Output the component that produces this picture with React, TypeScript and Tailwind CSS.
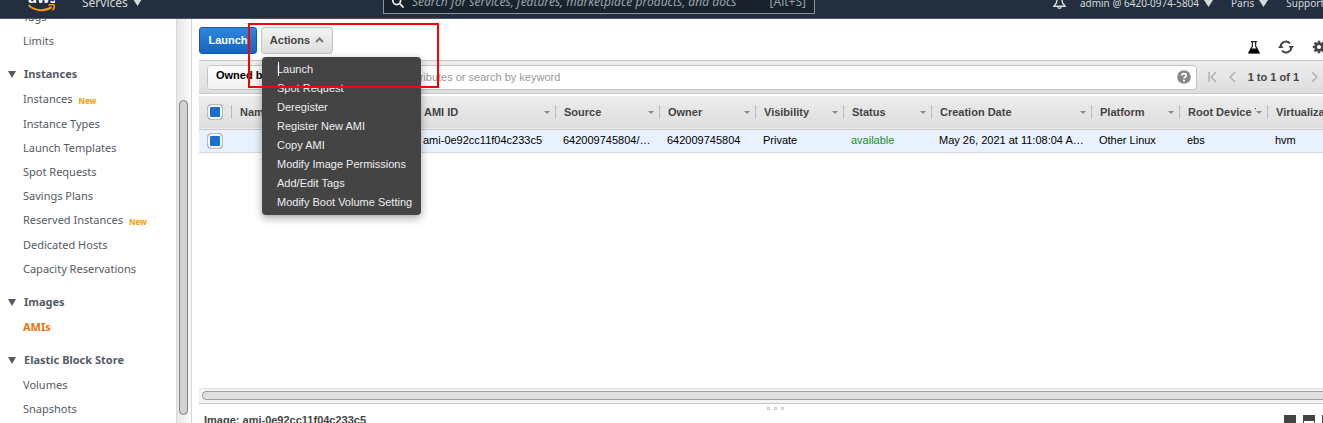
import type { ReactNode } from "react";

type NavItem = { label: string; isNew?: boolean; active?: boolean };
type NavSection = { title?: string; items: NavItem[] };

const sections: NavSection[] = [
  { items: [{ label: "Tags" }, { label: "Limits" }] },
  {
    title: "Instances",
    items: [
      { label: "Instances", isNew: true },
      { label: "Instance Types" },
      { label: "Launch Templates" },
      { label: "Spot Requests" },
      { label: "Savings Plans" },
      { label: "Reserved Instances", isNew: true },
      { label: "Dedicated Hosts" },
      { label: "Capacity Reservations" },
    ],
  },
  { title: "Images", items: [{ label: "AMIs", active: true }] },
  {
    title: "Elastic Block Store",
    items: [{ label: "Volumes" }, { label: "Snapshots" }],
  },
];

const actions = [
  "Launch",
  "Spot Request",
  "Deregister",
  "Register New AMI",
  "Copy AMI",
  "Modify Image Permissions",
  "Add/Edit Tags",
  "Modify Boot Volume Setting",
];

const columns = [
  { label: "Name", value: "", width: "w-[184px]" },
  { label: "AMI ID", value: "ami-0e92cc11f04c233c5", width: "w-[140px]" },
  { label: "Source", value: "642009745804/ami", width: "w-[104px]" },
  { label: "Owner", value: "642009745804", width: "w-24" },
  { label: "Visibility", value: "Private", width: "w-[88px]" },
  { label: "Status", value: "available", width: "w-[88px]" },
  { label: "Creation Date", value: "May 26, 2021 at 11:08:04 AM UTC", width: "w-40" },
  { label: "Platform", value: "Other Linux", width: "w-[88px]" },
  { label: "Root Device Type", value: "ebs", width: "w-[88px]" },
  { label: "Virtualization", value: "hvm", width: "w-[104px]" },
];

function Caret({ className }: { className: string }) {
  return (
    <svg viewBox="0 0 10 8" preserveAspectRatio="none" className={className} aria-hidden="true">
      <path d="M0 0h10L5 8z" fill="currentColor" />
    </svg>
  );
}

function TopMenu({ children }: { children: ReactNode }) {
  return (
    <button type="button" className="flex shrink-0 items-center gap-[5px] whitespace-nowrap">
      {children}
      <Caret className="h-[7px] w-[9px]" />
    </button>
  );
}

function TopBar() {
  return (
    <header className="-mt-[15px] flex h-[34px] shrink-0 items-center border-b border-[#4b5563] bg-[#232f3e] font-['Noto_Sans',sans-serif] text-[#d5dbdb]">
      <div className="flex w-[383px] shrink-0 items-center gap-[27px] pt-[2px] pl-7">
        <a href="#home" aria-label="AWS home">
          <svg viewBox="0 0 27 20" className="h-5 w-[27px]">
            <text x="0" y="10" fontSize="15" fontWeight="700" fill="#fff" fontFamily="Noto Sans, sans-serif">
              aws
            </text>
            <path d="M0.500 12.200C7 18.400 17 18.600 23.600 14.200" fill="none" stroke="#f90" strokeWidth="2" />
            <path d="M20.500 12.200c3-.8 5-.7 5.600-.2.5.8 0 3.400-1.500 5.200" fill="none" stroke="#f90" strokeWidth="1.500" />
          </svg>
        </a>
        <TopMenu>
          <span className="text-xs">Services</span>
        </TopMenu>
      </div>
      <div className="flex h-6 w-[432px] items-center gap-2 border border-[#879596] bg-[#1a222d] pt-px pr-2 pl-2">
        <svg viewBox="0 0 14 14" className="size-3 shrink-0" fill="none" stroke="#eaeded" strokeWidth="2" aria-hidden="true">
          <circle cx="5.500" cy="5.500" r="4.500" />
          <path d="M9 9l4.500 4.500" />
        </svg>
        <input
          aria-label="Search AWS"
          placeholder="Search for services, features, marketplace products, and docs"
          className="min-w-0 flex-1 bg-transparent text-xs italic placeholder:text-[#95a5a6]"
        />
        <span className="text-xs text-[#95a5a6]">[Alt+S]</span>
      </div>
      <div className="ml-auto -mr-px flex shrink-0 items-center pt-[3px] text-[10px]">
        <button type="button" aria-label="Notifications" className="mr-[14px]">
          <svg viewBox="0 0 14 14" className="size-[13px]" fill="none" stroke="currentColor" strokeWidth="1.500">
            <path d="M7 1C4.500 1 4 4 3.700 6.500L1 10h12L10.300 6.500C10 4 9.500 1 7 1z" />
            <path d="M5.200 10.500a1.800 1.800 0 0 0 3.600 0" />
          </svg>
        </button>
        <TopMenu>admin @ 6420-0974-5804</TopMenu>
        <span className="w-[18px]" />
        <TopMenu>Paris</TopMenu>
        <span className="w-[18px]" />
        <button type="button" className="whitespace-nowrap">Support</button>
      </div>
    </header>
  );
}

function Sidebar() {
  return (
    <aside className="flex w-48 shrink-0 overflow-hidden border-r border-[#d5d5d5] font-['Noto_Sans',sans-serif] text-[11px] text-[#545b64]">
      <nav aria-label="EC2" className="-mt-[14px] flex flex-1 flex-col gap-2">
        {sections.map((section, i) => (
          <section key={i} className="shrink-0">
            {section.title && (
              <h2 className="flex h-[26px] items-center gap-2 pl-2 font-bold">
                <Caret className="h-[7px] w-2" />
                {section.title}
              </h2>
            )}
            <ul>
              {section.items.map((item) => (
                <li
                  key={item.label}
                  className={item.isNew ? "flex h-[25px] items-center gap-[6px] pl-[23px]" : "flex h-6 items-center pl-[23px]"}
                >
                  <a
                    href="#nav"
                    className={item.active ? "whitespace-nowrap font-bold text-[#ec7211]" : "whitespace-nowrap"}
                  >
                    {item.label}
                  </a>
                  {item.isNew && <span className="pt-[3px] text-[8px] leading-none font-bold text-[#f90]">New</span>}
                </li>
              ))}
            </ul>
          </section>
        ))}
      </nav>
      <div className="flex w-[15px] shrink-0 justify-center border-l border-[#d9d9d9] bg-linear-to-r from-[#e6e6e6] to-[#fbfbfb] pt-[81px] pr-px pb-2">
        <div className="w-[9px] rounded-full border border-[#808080] bg-[#d2d2d2]" />
      </div>
    </aside>
  );
}

function ActionsMenu() {
  return (
    <div className="relative">
      <button
        type="button"
        aria-expanded="true"
        className="flex h-[27px] w-[72px] items-center justify-center gap-[5px] rounded-[3px] border border-[#c4c4c4] bg-linear-to-b from-[#f3f3f3] to-[#dedede] font-bold text-[#444]"
      >
        Actions
        <svg viewBox="0 0 9 6" className="h-[6px] w-[9px]" fill="none" stroke="#777" strokeWidth="2" aria-hidden="true">
          <path d="M1 5l3.500-3.500L8 5" />
        </svg>
      </button>
      <ul
        role="menu"
        className="absolute top-[30px] left-px z-10 w-[159px] rounded-[4px] bg-[#444] py-[3px] text-[#eee] shadow-[0_3px_8px_rgba(0,0,0,0.35)]"
      >
        {actions.map((label, i) => (
          <li key={label} role="none" className="relative">
            {i === 0 && <span className="absolute top-[2px] left-4 h-[14px] w-px bg-white" />}
            <button type="button" role="menuitem" className="block h-[19px] w-full pl-[15px] text-left whitespace-nowrap">
              {label}
            </button>
          </li>
        ))}
      </ul>
    </div>
  );
}

function Toolbar() {
  return (
    <div className="relative flex h-[41px] items-center gap-1 pt-px">
      <button
        type="button"
        className="h-[27px] w-[58px] rounded-[3px] border border-[#1059b2] bg-linear-to-b from-[#2f86dd] to-[#1565c0] font-bold text-white"
      >
        Launch
      </button>
      <ActionsMenu />
      <div className="ml-auto -mr-[3px] flex items-center gap-[18px] pt-[14px] text-[#444]">
        <button type="button" aria-label="Experiments">
          <svg viewBox="0 0 12 13" className="h-[13px] w-3">
            <path d="M3 .7h6M4.400 1v4L.9 11.600h10.200L7.600 5V1" fill="none" stroke="#222" strokeWidth="1.200" />
            <path d="M3 7.500h6l2.700 5H.3z" fill="#000" />
          </svg>
        </button>
        <button type="button" aria-label="Refresh">
          <svg viewBox="0 0 16 14" className="h-[14px] w-4">
            <path d="M2.700 7A5.300 5.300 0 0 1 12 3.400M13.300 7A5.300 5.300 0 0 1 4 10.600" fill="none" stroke="currentColor" strokeWidth="2" />
            <path d="M0 8h5.600L2.800 4.500zM10.400 6H16l-2.800 3.500z" fill="currentColor" />
          </svg>
        </button>
        <button type="button" aria-label="Settings">
          <svg viewBox="0 0 14 14" className="size-[14px]">
            <g stroke="currentColor" strokeWidth="2.600">
              <path d="M7 .8v12.400M.8 7h12.400M2.600 2.600l8.800 8.800M11.400 2.600l-8.800 8.800" />
            </g>
            <circle cx="7" cy="7" r="4.600" fill="currentColor" />
            <circle cx="7" cy="7" r="2" fill="#fff" />
          </svg>
        </button>
      </div>
      <div className="pointer-events-none absolute top-1 left-[49px] z-20 h-[65px] w-[191px] border-2 border-[#f00]" />
    </div>
  );
}

function Chevron({ d, label }: { d: string; label: string }) {
  return (
    <button type="button" aria-label={label}>
      <svg viewBox="0 0 9 12" className="h-3 w-[9px]" fill="none" stroke="#b0b0b0" strokeWidth="1.500">
        <path d={d} />
      </svg>
    </button>
  );
}

function FilterBar() {
  return (
    <div className="flex h-[34px] shrink-0 items-center border-y border-[#c8c8c8] bg-linear-to-b from-[#ededed] to-[#dedede] pl-2">
      <div className="flex h-[25px] flex-1 items-center overflow-hidden rounded-[4px] border border-[#c4c4c4] bg-white">
        <button
          type="button"
          className="flex h-full w-[104px] items-center gap-2 border-r border-[#ddd] bg-linear-to-b from-[#fdfdfd] to-[#f2f2f2] pb-1 pl-2 font-bold text-black"
        >
          Owned by me
          <Caret className="h-[5px] w-[7px]" />
        </button>
        <input
          aria-label="Filter"
          placeholder="Filter by tags and attributes or search by keyword"
          className="min-w-0 flex-1 bg-transparent pl-2 placeholder:text-[#999]"
        />
        <button type="button" aria-label="Help" className="mr-[5px]">
          <svg viewBox="0 0 14 14" className="size-[14px]">
            <circle cx="7" cy="7" r="6.800" fill="#888" />
            <path d="M4.800 5.600C4.800 2.900 9.200 3 9.200 5.400 9.200 7 7 6.900 7 8.600" fill="none" stroke="#fff" strokeWidth="1.800" />
            <path d="M6 9.700h2v1.800H6z" fill="#fff" />
          </svg>
        </button>
      </div>
      <div className="flex items-center gap-[11px] pr-1 pl-[11px] whitespace-nowrap">
        <Chevron label="First page" d="M1 1v10M8 1L3 6l5 5" />
        <Chevron label="Previous page" d="M7 1L2 6l5 5" />
        <span className="font-bold text-[#444]">1 to 1 of 1</span>
        <Chevron label="Next page" d="M2 1l5 5-5 5" />
      </div>
    </div>
  );
}

function Check({ label }: { label: string }) {
  return (
    <input
      type="checkbox"
      defaultChecked
      aria-label={label}
      className="block size-4 appearance-none rounded-[4px] border border-[#bbb] bg-white checked:bg-[#1b70cc] checked:shadow-[inset_0_0_0_2px_#f4f4f4]"
    />
  );
}

function ImageTable() {
  return (
    <div className="mt-[2px] flex-1 overflow-hidden">
      <table className="w-[1172px] table-fixed border-collapse text-left">
        <thead>
          <tr className="h-[33px] border-b border-[#c8c8c8] bg-linear-to-b from-[#ececec] to-[#dedede]">
            <th className="w-8 p-0 pl-2">
              <Check label="Select all" />
            </th>
            {columns.map((column) => (
              <th key={column.label} className={`${column.width} p-0 font-bold text-[#444]`}>
                <div className="flex h-[14px] items-center border-l border-[#bbb] pr-[5px] pl-2">
                  <span className="flex-1 overflow-hidden whitespace-nowrap">{column.label}</span>
                  <Caret className="h-[3px] w-[6px] shrink-0 text-[#888]" />
                </div>
              </th>
            ))}
          </tr>
        </thead>
        <tbody>
          <tr className="h-[23px] border-b border-[#d5d9de] bg-[#e8f1fd]">
            <td className="p-0 pl-2">
              <Check label="Select ami-0e92cc11f04c233c5" />
            </td>
            {columns.map((column) => (
              <td
                key={column.label}
                className={
                  column.label === "Status"
                    ? "truncate p-0 pr-1 pl-2 text-[#1a9029]"
                    : "truncate p-0 pr-1 pl-2 text-black"
                }
              >
                {column.value}
              </td>
            ))}
          </tr>
        </tbody>
      </table>
    </div>
  );
}

function PaneIcon({ d }: { d: string }) {
  return (
    <svg viewBox="0 0 12 12" className="size-3" aria-hidden="true">
      <path d="M0 0h12v12H0z" fill="#444" />
      <path d={d} fill="#fff" />
    </svg>
  );
}

function DetailsPane() {
  return (
    <section className="h-[19px] shrink-0 overflow-hidden">
      <div className="flex h-2 items-center justify-center gap-1 pl-7">
        {[0, 1, 2].map((dot) => (
          <span key={dot} className="size-[3px] border border-[#ccc] bg-[#eee]" />
        ))}
      </div>
      <div className="flex justify-between pl-[5px]">
        <h3 className="leading-4 font-bold text-[#444]">Image: ami-0e92cc11f04c233c5</h3>
        <div className="-mr-[11px] flex gap-[7px] pt-[2px]">
          <button type="button" aria-label="Small pane">
            <PaneIcon d="M1 8h10v3H1z" />
          </button>
          <button type="button" aria-label="Half pane">
            <PaneIcon d="M1 6h10v5H1z" />
          </button>
          <button type="button" aria-label="Full pane">
            <PaneIcon d="M1 2h10v9H1z" />
          </button>
        </div>
      </div>
    </section>
  );
}

export default function App() {
  return (
    <div className="flex h-screen flex-col overflow-hidden bg-white font-['Liberation_Sans',Arial,sans-serif] text-[11px]">
      <TopBar />
      <div className="flex min-h-0 flex-1">
        <Sidebar />
        <main className="flex min-w-0 flex-1 flex-col pl-[7px]">
          <Toolbar />
          <FilterBar />
          <ImageTable />
          <div className="h-4 shrink-0 overflow-hidden border-t border-b border-t-[#e0e0e0] border-b-[#c8c8c8] bg-[#f4f4f4] pt-[2px] pl-[3px]">
            <div className="h-[9px] rounded-l-full border border-r-0 border-[#a0a0a0] bg-[#e0e0e0]" />
          </div>
          <DetailsPane />
        </main>
      </div>
    </div>
  );
}
